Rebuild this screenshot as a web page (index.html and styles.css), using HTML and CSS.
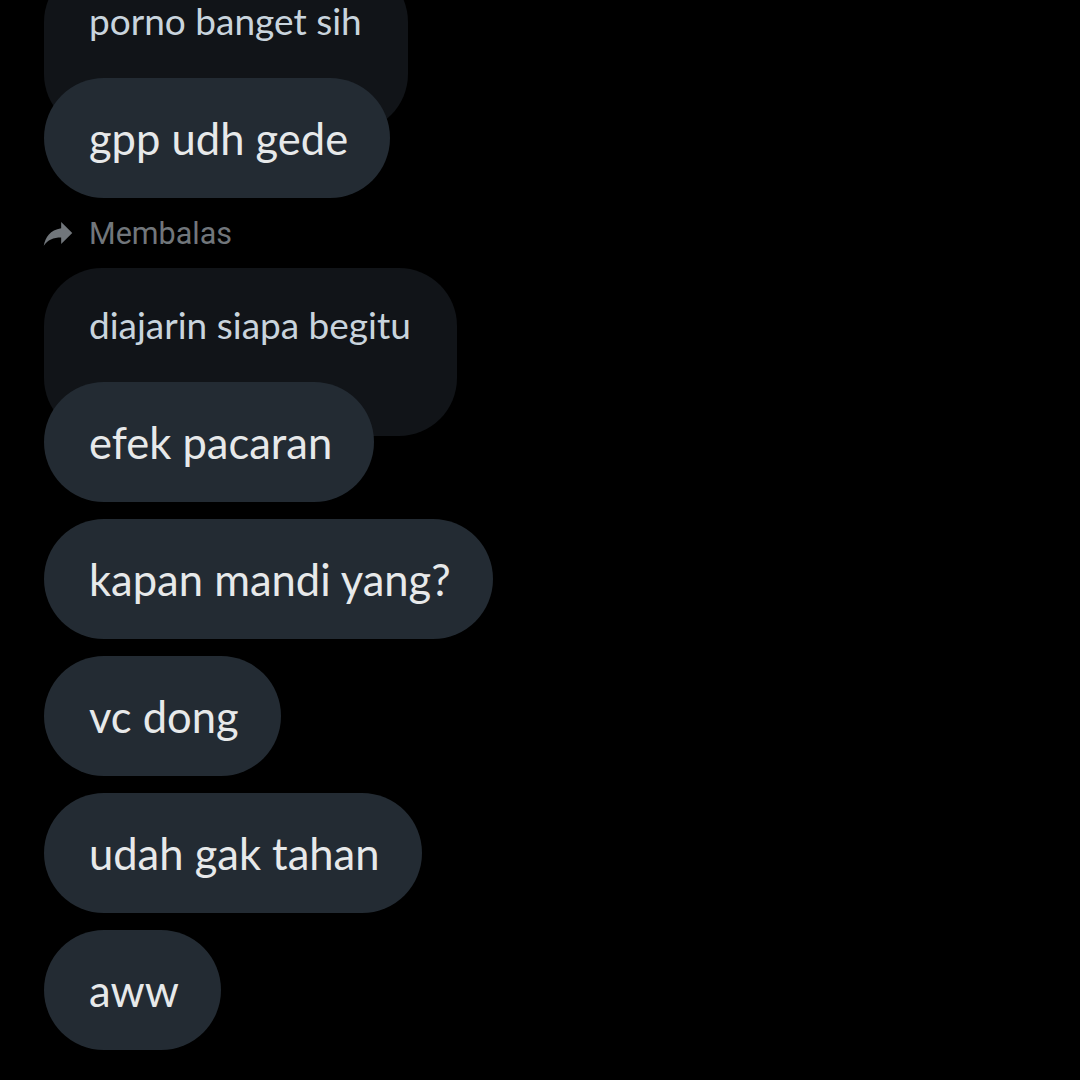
FILE: index.html
```html
<!DOCTYPE html>
<html>
<head>
<meta charset="utf-8">
<link rel="stylesheet" href="styles.css">
</head>
<body>
<div class="chat">
  <div class="group first">
    <div class="quote">porno banget sih</div>
    <div class="bubble over">gpp udh gede</div>
  </div>
  <div class="replying">
    <svg class="icon" viewBox="0 0 24 24" width="38" height="38"><path d="M14 9V5l7 7-7 7v-4.1c-5 0-8.5 1.6-11 5.1 1-5 4-10 11-11z"/></svg>
    <span>Membalas</span>
  </div>
  <div class="group">
    <div class="quote">diajarin siapa begitu</div>
    <div class="bubble over">efek pacaran</div>
  </div>
  <div class="bubble">kapan mandi yang?</div>
  <div class="bubble">vc dong</div>
  <div class="bubble">udah gak tahan</div>
  <div class="bubble">aww</div>
</div>
</body>
</html>
```
FILE: styles.css
```css
html, body {
  margin: 0;
  padding: 0;
  background: #000;
  height: 1080px;
  overflow: hidden;
}
.chat {
  display: flex;
  flex-direction: column;
  align-items: flex-start;
  gap: 17px;
  padding-left: 44px;
}
.group {
  display: flex;
  flex-direction: column;
  align-items: flex-start;
}
.group.first {
  margin-top: -36px;
}
.quote {
  background: #111418;
  color: #c9d4dd;
  font-family: Lato, "Open Sans", sans-serif;
  font-size: 37px;
  line-height: 40px;
  padding: 37px 46px 91px 45px;
  border-radius: 58px;
}
.bubble {
  background: #232b33;
  color: #e7e9ea;
  font-family: Lato, "Open Sans", sans-serif;
  font-size: 43.5px;
  line-height: 48px;
  padding: 36px 42px 36px 45px;
  border-radius: 60px;
}
.bubble.over {
  margin-top: -54px;
}
.replying {
  display: flex;
  align-items: center;
  height: 36px;
  gap: 12px;
  margin-left: -5px;
  color: #71767b;
  font-family: Roboto, "Liberation Sans", sans-serif;
  font-size: 30.5px;
}
.icon {
  fill: #71767b;
  flex: none;
}
```
